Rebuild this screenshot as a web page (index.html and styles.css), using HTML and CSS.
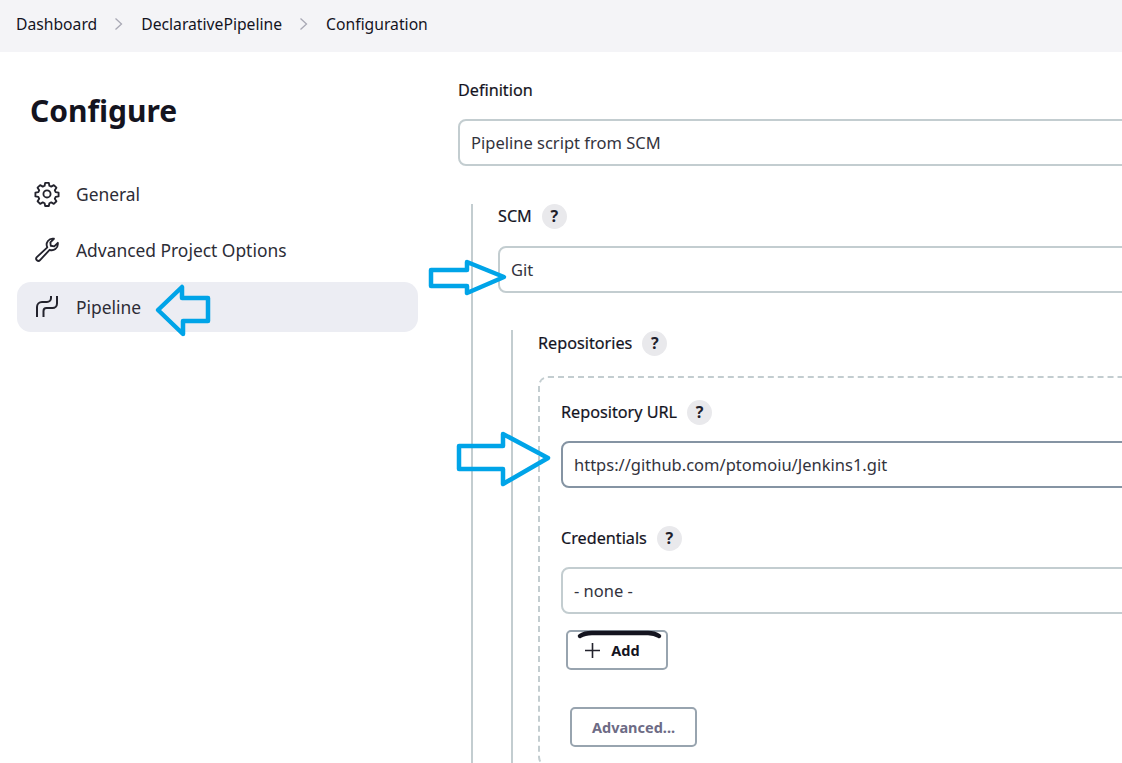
FILE: index.html
```html
<!DOCTYPE html>
<html lang="en">
<head>
<meta charset="utf-8">
<title>Configuration</title>
<link rel="stylesheet" href="styles.css">
</head>
<body>
<div class="page">
  <nav class="crumbs">
    <span>Dashboard</span>
    <svg class="chev" viewBox="0 0 10 14"><path d="M1.5 1.5 7.5 7 1.5 12.5"/></svg>
    <span>DeclarativePipeline</span>
    <svg class="chev" viewBox="0 0 10 14"><path d="M1.5 1.5 7.5 7 1.5 12.5"/></svg>
    <span>Configuration</span>
  </nav>
  <div class="layout">
    <aside class="side">
      <h1 class="title">Configure</h1>
      <ul class="menu">
        <li class="item">
          <svg class="ico" viewBox="0 0 24 24"><path d="M10.3 2.6h3.4l.5 2.7 1.7.8 2.4-1.4 2.4 2.4-1.5 2.4.8 1.7 2.7.5v3.4l-2.7.5-.8 1.7 1.5 2.3-2.4 2.4-2.4-1.4-1.700.8-.5 2.6h-3.4l-.5-2.6-1.7-.8-2.4 1.4-2.4-2.4 1.5-2.3-.8-1.7-2.7-.5v-3.4l2.7-.5.8-1.7-1.5-2.4 2.4-2.4 2.4 1.4 1.7-.8z" transform="translate(0 -.9)"/><circle cx="12" cy="11.9" r="3.3"/></svg>
          <span>General</span>
        </li>
        <li class="item">
          <svg class="ico" viewBox="0 0 24 24"><path d="M22 6.2a5.6 5.6 0 0 1-7.6 5.6L5.6 21.4a2 2 0 0 1-3-2.8l9.7-9A5.6 5.6 0 0 1 18.400 1.600l-3.300 3.300.4 3.200 3.200.6 3.300-3.300c0 .3 0 .5 0 .8z"/></svg>
          <span>Advanced Project Options</span>
        </li>
        <li class="item active">
          <svg class="ico pipe" viewBox="0 0 26 26"><path d="M3 23V13a5 5 0 0 1 5-5h5a4 4 0 0 0 4-4V2"/><path d="M9.500 23v-6a3 3 0 0 1 3-3h6a4.500 4.500 0 0 0 4.500-4.500V2"/></svg>
          <span>Pipeline</span>
        </li>
      </ul>
    </aside>
    <main class="main">
      <div class="label first"><span>Definition</span></div>
      <div class="field">Pipeline script from SCM</div>
      <section class="nest scm">
        <div class="label"><span>SCM</span><i class="help">?</i></div>
        <div class="field">Git</div>
        <section class="nest repos">
          <div class="label"><span>Repositories</span><i class="help">?</i></div>
          <div class="box">
            <div class="label"><span>Repository URL</span><i class="help">?</i></div>
            <div class="field strong">https://github.com/ptomoiu/Jenkins1.git</div>
            <div class="label creds"><span>Credentials</span><i class="help">?</i></div>
            <div class="field">- none -</div>
            <button class="btn add" type="button">
              <svg class="plus" viewBox="0 0 14 14"><path d="M7 0v14M0 7h14"/></svg>
              <span>Add</span>
            </button>
            <button class="btn adv" type="button">Advanced...</button>
          </div>
        </section>
      </section>
    </main>
  </div>
  <svg class="marks" viewBox="0 0 1122 763">
    <path class="arrow" d="M158 310 182 287v11h26v23h-25v13z"/>
    <path class="arrow" d="M431 270h36v-8l37 15-37 16v-7h-36z"/>
    <path class="arrow" d="M459 446h44v-12l45 24-45 26v-15h-44z"/>
    <path class="scribble" d="M580 636c3-2 7-3 12-3h56c5 0 8 1 11 3"/>
  </svg>
</div>
</body>
</html>
```
FILE: styles.css
```css
* { box-sizing: border-box; }
html, body { margin: 0; padding: 0; background: #fff; }
.page {
  position: relative;
  width: 1122px;
  height: 763px;
  overflow: hidden;
  font-family: "Noto Sans", "Open Sans", sans-serif;
  font-size: 16px;
  color: #14141f;
}
.crumbs {
  height: 52px;
  background: #f4f4f7;
  display: flex;
  align-items: center;
  gap: 17px;
  padding: 0 0 4px 16px;
  font-size: 15.700px;
}
.chev { width: 10px; height: 14px; fill: none; stroke: #a9a9b5; stroke-width: 1.300; }
.layout { display: flex; }
.side { width: 458px; flex: none; padding: 0 40px 0 17px; }
.title {
  margin: 38px 0 0 13px;
  font-size: 30px;
  line-height: 42px;
  font-weight: 700;
}
.menu { list-style: none; margin: 38px 0 0; padding: 0; display: flex; flex-direction: column; gap: 6px; }
.item {
  height: 50px;
  border-radius: 14px;
  display: flex;
  align-items: center;
  gap: 16px;
  padding: 0 0 2px 17px;
  color: #2c2c36;
  font-size: 17.400px;
}
.item.active { background: #ecedf3; padding-bottom: 0; }
.ico { width: 26px; height: 26px; fill: none; stroke: #23232d; stroke-width: 1.700; stroke-linecap: round; stroke-linejoin: round; flex: none; }
.pipe { stroke-width: 2; stroke-linecap: butt; }
.main { width: 900px; flex: none; }
.label {
  display: flex;
  align-items: center;
  gap: 10px;
  height: 24px;
  font-weight: 400;
  font-size: 16.200px;
  -webkit-text-stroke: 0.2px #14141f;
}
.label.first { margin-top: 26px; margin-bottom: 17px; }
.help {
  width: 25px;
  height: 25px;
  flex: none;
  border-radius: 50%;
  background: #e9e9ec;
  font: 700 16px/25px "Noto Sans", sans-serif;
  text-align: center;
  color: #20202a;
  -webkit-text-stroke: 0;
}
.field {
  height: 47px;
  border: 2px solid #c3cdd0;
  border-radius: 8px;
  padding: 0 11px;
  display: flex;
  align-items: center;
  background: #fff;
  color: #33333d;
  font-size: 16.500px;
}
.field.strong { border-color: #8594a3; }
.nest { border-left: 2px solid #c3cdd0; }
.scm { margin: 38px 0 0 13px; padding: 0 0 0 25px; }
.scm > .label { margin-bottom: 18px; }
.repos { margin: 37px 0 0 13px; padding: 1px 0 0 25px; }
.repos > .label { margin-bottom: 21px; }
.box {
  border: 2px dashed #c3cdd0;
  border-radius: 10px;
  padding: 22px 20px 18px 21px;
}
.box > .label { margin-bottom: 17px; }
.box > .label.creds { margin-top: 38px; margin-bottom: 17px; }
.btn {
  display: flex;
  align-items: center;
  justify-content: center;
  height: 40px;
  background: #fff;
  border: 2px solid #98a4af;
  border-radius: 5px;
  font-family: "Noto Sans", sans-serif;
  font-size: 14.500px;
  font-weight: 700;
}
.add { width: 102px; margin: 16px 0 0 5px; gap: 11px; color: #14141f; padding: 0 9px 0 0; }
.plus { width: 15px; height: 15px; fill: none; stroke: #23232d; stroke-width: 1.500; }
.adv { width: 127px; margin: 37px 0 0 9px; color: #6d6b85; }
.marks { position: absolute; inset: 0; width: 1122px; height: 763px; pointer-events: none; }
.arrow { fill: none; stroke: #00a4e8; stroke-width: 4.500; stroke-linejoin: round; }
.scribble { fill: none; stroke: #14141f; stroke-width: 4.500; stroke-linecap: round; }
```
